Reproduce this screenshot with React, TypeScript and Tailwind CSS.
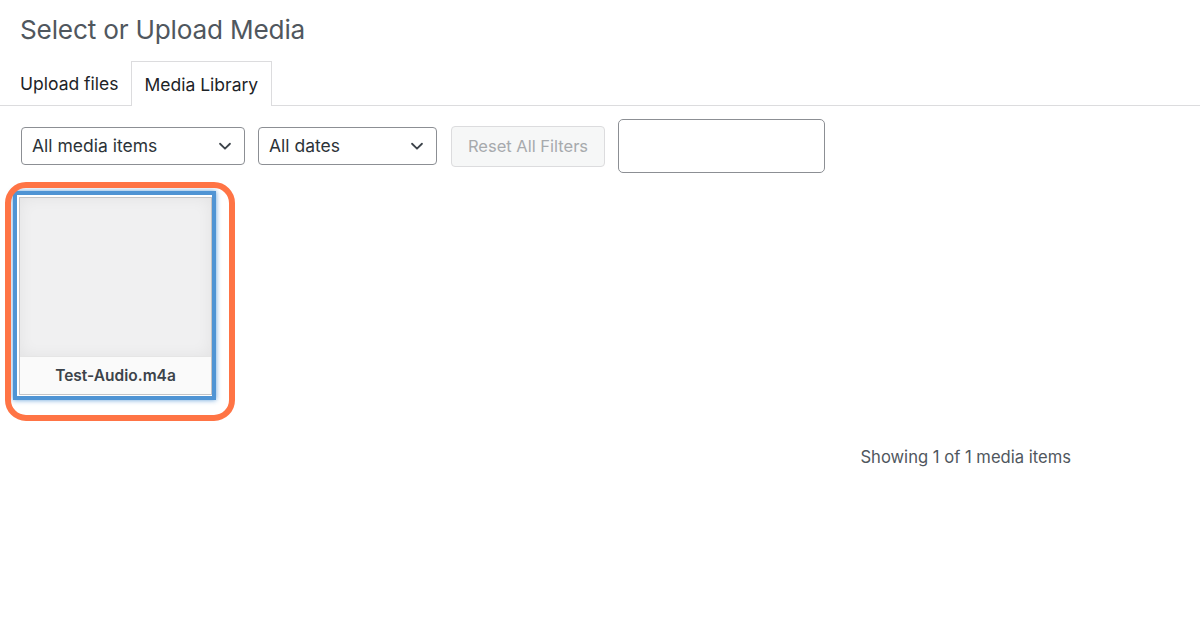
import React from 'react';

function Chevron() {
  return (
    <svg className="w-[18px] h-[18px] text-[#3c434a]" viewBox="0 0 20 20" fill="none" stroke="currentColor">
      <path d="M4.5 7.5l5.5 5.5 5.5-5.5" strokeWidth={2} strokeLinecap="round" strokeLinejoin="round" />
    </svg>
  );
}

function FilterSelect({ label, width }: { label: string; width: string }) {
  return (
    <div
      className={`${width} h-[38px] flex items-center justify-between pl-[10px] pr-[10px] border border-[#8c8f94] rounded-[4px] bg-white text-[17.5px] text-[#2c3338]`}
    >
      <span>{label}</span>
      <Chevron />
    </div>
  );
}

export default function App() {
  return (
    <div className="relative w-[1200px] h-[618px] bg-white overflow-hidden font-['Inter',_sans-serif]">
      <h1 className="pl-5 pt-[13px] text-[26.2px] leading-[34px] text-[#50575e] tracking-[-0.2px]">
        Select or Upload Media
      </h1>

      {/* router tabs */}
      <div className="mt-[14px] flex items-end border-b border-[#dcdcde] h-[45px] pl-5">
        <div className="h-[44px] flex items-center pr-3 pt-[2px] text-[17.5px] text-[#1d2327]">Upload files</div>
        <div className="h-[45px] -mb-px flex items-center pt-[2px] px-[13px] border border-b-0 border-[#dcdcde] bg-white text-[17.5px] text-[#1d2327]">
          Media Library
        </div>
      </div>

      {/* toolbar */}
      <div className="flex items-center pl-[21px] mt-[13px]">
        <FilterSelect label="All media items" width="w-[224px]" />
        <div className="w-[13px]" />
        <FilterSelect label="All dates" width="w-[179px]" />
        <button className="ml-[14px] w-[154px] h-[41px] rounded-[4px] border border-[#dcdcde] bg-[#f6f7f7] text-[16.5px] text-[#a7aaad]">
          Reset All Filters
        </button>
        <div className="ml-[13px] w-[207px] h-[54px] rounded-[5px] border border-[#8c8f94] bg-white" />
      </div>

      {/* attachments */}
      <div className="pl-[13px] mt-[18px]">
        <div className="w-[203px] h-[209px] p-[4px] bg-[#4f94d4] shadow-[0_0_5px_rgba(79,148,212,0.9)]">
          <div className="w-full h-full bg-white p-[2px] pr-0 pb-[1px]">
            <div className="w-[193px] h-[198px] border border-[#c3c4c7] flex flex-col">
              <div className="flex-1 bg-[#f0f0f1] shadow-[inset_0_0_15px_rgba(0,0,0,0.06)]" />
              <div className="h-[38px] border-t border-[#e5e5e5] bg-[#fafafa] flex items-center justify-center text-[15.5px] font-semibold text-[#3c434a]">
                Test-Audio.m4a
              </div>
            </div>
          </div>
        </div>
      </div>

      {/* highlight ring drawn over the selected item */}
      <div className="absolute left-[5px] top-[182px] w-[230px] h-[239px] border-[6px] border-[#ff7445] rounded-[21px] pointer-events-none" />

      <div className="flex justify-end pr-[129px] mt-[45px] text-[16.6px] text-[#50575e]">
        Showing 1 of 1 media items
      </div>
    </div>
  );
}
